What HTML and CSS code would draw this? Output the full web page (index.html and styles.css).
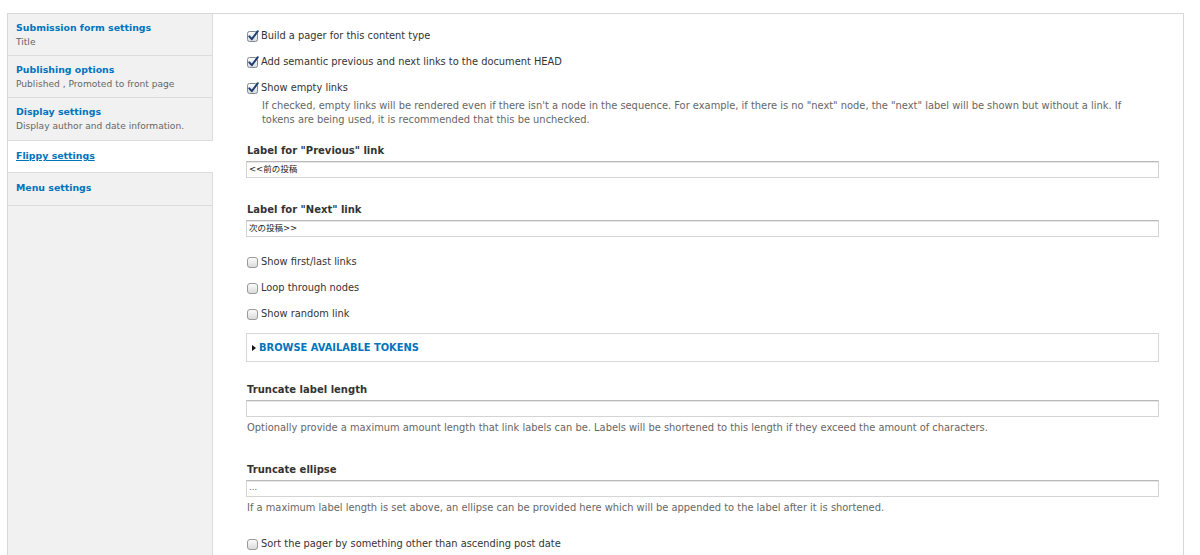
FILE: index.html
```html
<!DOCTYPE html>
<html lang="en">
<head>
<meta charset="utf-8">
<title>Flippy settings</title>
<link rel="stylesheet" href="styles.css">
</head>
<body>
<div class="vtabs">
  <ul class="tabs">
    <li class="tab"><a class="tab-title" href="#">Submission form settings</a><span class="tab-summary">Title</span></li>
    <li class="tab"><a class="tab-title" href="#">Publishing options</a><span class="tab-summary">Published , Promoted to front page</span></li>
    <li class="tab"><a class="tab-title" href="#">Display settings</a><span class="tab-summary">Display author and date information.</span></li>
    <li class="tab tab-single tab-active"><a class="tab-title" href="#">Flippy settings</a></li>
    <li class="tab tab-single"><a class="tab-title" href="#">Menu settings</a></li>
  </ul>
  <div class="panel">
    <div class="check checked first"><span class="box"><svg viewBox="0 0 13 13" width="13" height="13"><defs><linearGradient id="g1" x1="0" y1="0" x2="0" y2="1"><stop offset="0" stop-color="#fdfdfd"/><stop offset="1" stop-color="#d9d9d9"/></linearGradient></defs><rect x="0.5" y="1.5" width="10" height="10" rx="2" fill="url(#g1)" stroke="#7f8a99"/><path d="M2.3 6.4 L4.8 9.2 L10.8 1.2" fill="none" stroke="#1f3f75" stroke-width="2" stroke-linecap="round" stroke-linejoin="round"/></svg></span><label>Build a pager for this content type</label></div>
    <div class="check checked"><span class="box"><svg viewBox="0 0 13 13" width="13" height="13"><rect x="0.5" y="1.5" width="10" height="10" rx="2" fill="url(#g1)" stroke="#7f8a99"/><path d="M2.3 6.4 L4.8 9.2 L10.8 1.2" fill="none" stroke="#1f3f75" stroke-width="2" stroke-linecap="round" stroke-linejoin="round"/></svg></span><label>Add semantic previous and next links to the document HEAD</label></div>
    <div class="check checked"><span class="box"><svg viewBox="0 0 13 13" width="13" height="13"><rect x="0.5" y="1.5" width="10" height="10" rx="2" fill="url(#g1)" stroke="#7f8a99"/><path d="M2.3 6.4 L4.8 9.2 L10.8 1.2" fill="none" stroke="#1f3f75" stroke-width="2" stroke-linecap="round" stroke-linejoin="round"/></svg></span><label>Show empty links</label></div>
    <div class="desc desc-indent">If checked, empty links will be rendered even if there isn't a node in the sequence. For example, if there is no "next" node, the "next" label will be shown but without a link. If tokens are being used, it is recommended that this be unchecked.</div>

    <div class="field field-prev">
      <label class="field-label">Label for "Previous" link</label>
      <div class="input">&lt;&lt;前の投稿</div>
    </div>
    <div class="field field-next">
      <label class="field-label">Label for "Next" link</label>
      <div class="input">次の投稿&gt;&gt;</div>
    </div>

    <div class="check unchecked gap-top"><span class="box"><svg viewBox="0 0 13 13" width="13" height="13"><rect x="0.5" y="1.5" width="10" height="10" rx="2.5" fill="url(#g1)" stroke="#9a9a9a"/></svg></span><label>Show first/last links</label></div>
    <div class="check unchecked"><span class="box"><svg viewBox="0 0 13 13" width="13" height="13"><rect x="0.5" y="1.5" width="10" height="10" rx="2.5" fill="url(#g1)" stroke="#9a9a9a"/></svg></span><label>Loop through nodes</label></div>
    <div class="check unchecked"><span class="box"><svg viewBox="0 0 13 13" width="13" height="13"><rect x="0.5" y="1.5" width="10" height="10" rx="2.5" fill="url(#g1)" stroke="#9a9a9a"/></svg></span><label>Show random link</label></div>

    <div class="fieldset"><span class="tri"></span><a href="#" class="legend">BROWSE AVAILABLE TOKENS</a></div>

    <div class="field field-trunc">
      <label class="field-label">Truncate label length</label>
      <div class="input"></div>
      <div class="desc">Optionally provide a maximum amount length that link labels can be. Labels will be shortened to this length if they exceed the amount of characters.</div>
    </div>
    <div class="field field-ellipse">
      <label class="field-label">Truncate ellipse</label>
      <div class="input input-ell">...</div>
      <div class="desc">If a maximum label length is set above, an ellipse can be provided here which will be appended to the label after it is shortened.</div>
    </div>

    <div class="check unchecked sort"><span class="box"><svg viewBox="0 0 13 13" width="13" height="13"><rect x="0.5" y="1.5" width="10" height="10" rx="2.5" fill="url(#g1)" stroke="#9a9a9a"/></svg></span><label>Sort the pager by something other than ascending post date</label></div>
  </div>
</div>
</body>
</html>
```

FILE: styles.css
```css
html, body {
  margin: 0;
  padding: 0;
  background: #fff;
  overflow: hidden;
}
body {
  font-family: "DejaVu Sans", Verdana, sans-serif;
  font-size: 10px;
  color: #333;
}
.vtabs {
  display: flex;
  margin: 13px 0 0 7px;
  width: 1177px;
  height: 560px;
  box-sizing: border-box;
  border: 1px solid #d8d8d8;
  border-bottom: none;
}
.tabs {
  list-style: none;
  margin: 0;
  padding: 0;
  width: 204px;
  flex: none;
  background: #f1f1f1;
  border-right: 1px solid #dcdcdc;
}
.tab {
  display: flex;
  flex-direction: column;
  padding: 6px 8px 5px 8px;
  border-bottom: 1px solid #dcdcdc;
  line-height: 15px;
  height: 30px;
}
.tab:nth-child(3) {
  padding-bottom: 6px;
}
.tab-single {
  height: 15px;
  padding-top: 7px;
  padding-bottom: 9px;
}
.tab-single + .tab-single {
  padding-bottom: 10px;
}
.tab-active {
  background: #fff;
  margin-right: -1px;
  position: relative;
}
.tab-title {
  color: #0074bd;
  font-weight: bold;
  font-size: 9.4px;
  text-decoration: none;
}
.tab-active .tab-title {
  text-decoration: underline;
}
.tab-summary {
  color: #666;
  font-size: 9.1px;
}
.panel {
  flex: 1;
  padding: 15px 24px 0 33px;
}
.check {
  display: flex;
  align-items: center;
  height: 14px;
  line-height: 14px;
  margin: 12px 0 0 1px;
}
.check.first {
  margin-top: 0;
}
.box {
  width: 13px;
  height: 13px;
  flex: none;
  display: block;
  margin-right: 1px;
}
.box svg {
  display: block;
}
.check label {
  font-size: 9.85px;
  color: #333;
}
.desc {
  color: #666;
  font-size: 9.9px;
  line-height: 14px;
  margin-top: 4px;
  padding-left: 1px;
}
.desc-indent {
  padding-left: 16px;
  padding-right: 20px;
}
.field {
  display: flex;
  flex-direction: column;
}
.field-label {
  font-weight: bold;
  font-size: 10px;
  line-height: 14px;
  color: #333;
  padding-left: 1px;
}
.input {
  margin-top: 3px;
  height: 15px;
  border: 1px solid #d4d4d4;
  border-top-color: #b9b9b9;
  box-shadow: inset 0 1px 0 #e8e8e8;
  font-family: "DejaVu Sans", "Noto Sans CJK JP", sans-serif;
  font-size: 8.5px;
  line-height: 15px;
  padding-left: 2px;
  color: #222;
}
.input-ell {
  color: #666;
  line-height: 13px;
}
.field-prev {
  margin-top: 17px;
}
.field-next {
  margin-top: 25px;
}
.gap-top {
  margin-top: 18px;
}
.fieldset {
  margin-top: 12px;
  height: 27px;
  border: 1px solid #d8d8d8;
  display: flex;
  align-items: center;
  padding-left: 5px;
}
.tri {
  width: 0;
  height: 0;
  border-top: 3px solid transparent;
  border-bottom: 3px solid transparent;
  border-left: 4px solid #111;
  margin-right: 3px;
}
.legend {
  color: #0074bd;
  font-weight: bold;
  font-size: 9.9px;
  text-decoration: none;
}
.field-trunc {
  margin-top: 21px;
}
.field-ellipse {
  margin-top: 28px;
}
.sort {
  margin-top: 22px;
}
```
